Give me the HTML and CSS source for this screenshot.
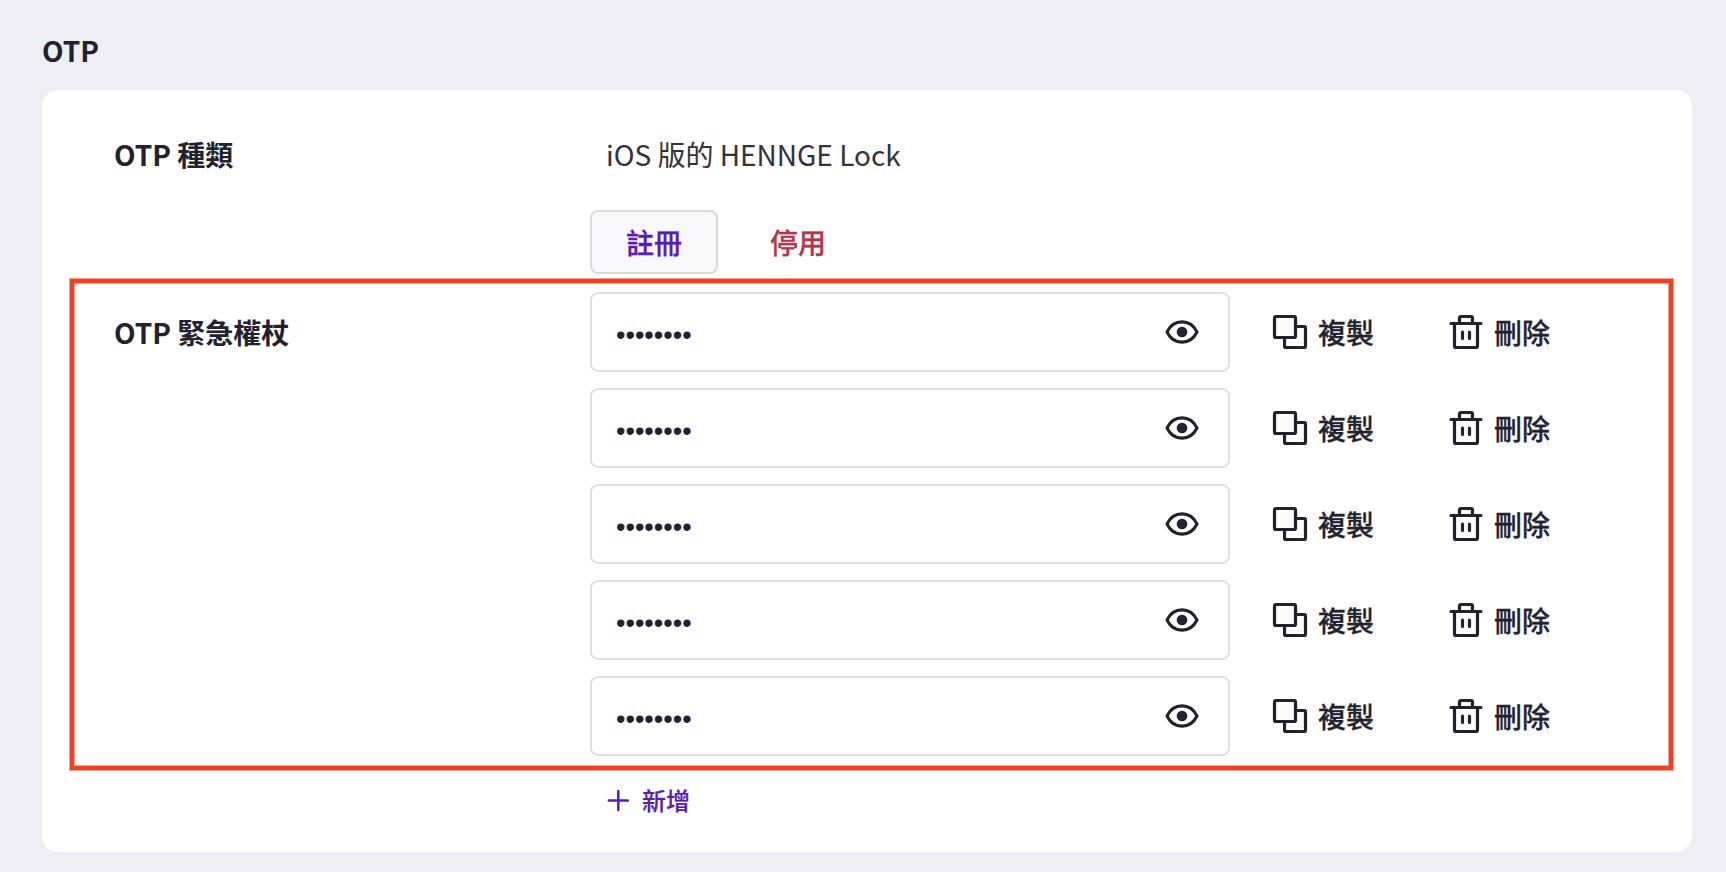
FILE: index.html
```html
<!DOCTYPE html>
<html lang="zh-Hant">
<head>
<meta charset="utf-8">
<meta name="viewport" content="width=device-width, initial-scale=1">
<title>OTP</title>
<link rel="stylesheet" href="styles.css">
</head>
<body>
<svg class="sprite" aria-hidden="true">
  <symbol id="eye" viewBox="0 0 36 36">
    <path d="M3 18C6.200 11.500 12 7.900 18 7.900S29.800 11.500 33 18C29.800 24.500 24 28.100 18 28.100S6.200 24.500 3 18Z" fill="none" stroke="currentColor" stroke-width="3.100" stroke-linejoin="round"/>
    <circle cx="18" cy="18" r="5.300" fill="currentColor"/>
  </symbol>
  <symbol id="copy" viewBox="0 0 36 36">
    <g fill="none" stroke="currentColor" stroke-width="3.200">
      <rect x="12.500" y="12.500" width="21" height="21" rx="1.500"/>
      <rect x="2.500" y="2.500" width="21" height="21" rx="1.500" fill="#fcfcfd"/>
    </g>
  </symbol>
  <symbol id="trash" viewBox="0 0 36 36">
    <g fill="none" stroke="currentColor" stroke-width="3.200" stroke-linecap="round" stroke-linejoin="round">
      <path d="M3 9.500H33"/>
      <path d="M11.500 9.500V4a1.500 1.500 0 0 1 1.500-1.500H23A1.500 1.500 0 0 1 24.500 4V9.500"/>
      <path d="M6.500 9.500V32A1.500 1.500 0 0 0 8 33.500H28A1.500 1.500 0 0 0 29.500 32V9.500"/>
      <path d="M14.500 18V24.500M21.500 18V24.500"/>
    </g>
  </symbol>
</svg>
<main class="page">
  <h1 class="title">OTP</h1>
  <section class="card">
    <div class="row">
      <h2 class="label">OTP 種類</h2>
      <div class="type">
        <p class="value">iOS 版的 HENNGE Lock</p>
        <div class="buttons">
          <button class="btn btn-primary" type="button">註冊</button>
          <button class="btn btn-danger" type="button">停用</button>
        </div>
      </div>
    </div>
    <div class="row tokens">
      <h2 class="label label-token">OTP 緊急權杖</h2>
      <ul class="list">
        <li class="item">
          <div class="field">
            <input class="input" type="password" value="48201937" aria-label="OTP 緊急權杖 1">
            <button class="reveal" type="button" aria-label="顯示"><svg class="icon"><use href="#eye"/></svg></button>
          </div>
          <div class="actions">
            <button class="action" type="button"><svg class="icon"><use href="#copy"/></svg>複製</button>
            <button class="action" type="button"><svg class="icon"><use href="#trash"/></svg>刪除</button>
          </div>
        </li>
        <li class="item">
          <div class="field">
            <input class="input" type="password" value="59310284" aria-label="OTP 緊急權杖 2">
            <button class="reveal" type="button" aria-label="顯示"><svg class="icon"><use href="#eye"/></svg></button>
          </div>
          <div class="actions">
            <button class="action" type="button"><svg class="icon"><use href="#copy"/></svg>複製</button>
            <button class="action" type="button"><svg class="icon"><use href="#trash"/></svg>刪除</button>
          </div>
        </li>
        <li class="item">
          <div class="field">
            <input class="input" type="password" value="70623915" aria-label="OTP 緊急權杖 3">
            <button class="reveal" type="button" aria-label="顯示"><svg class="icon"><use href="#eye"/></svg></button>
          </div>
          <div class="actions">
            <button class="action" type="button"><svg class="icon"><use href="#copy"/></svg>複製</button>
            <button class="action" type="button"><svg class="icon"><use href="#trash"/></svg>刪除</button>
          </div>
        </li>
        <li class="item">
          <div class="field">
            <input class="input" type="password" value="18475026" aria-label="OTP 緊急權杖 4">
            <button class="reveal" type="button" aria-label="顯示"><svg class="icon"><use href="#eye"/></svg></button>
          </div>
          <div class="actions">
            <button class="action" type="button"><svg class="icon"><use href="#copy"/></svg>複製</button>
            <button class="action" type="button"><svg class="icon"><use href="#trash"/></svg>刪除</button>
          </div>
        </li>
        <li class="item">
          <div class="field">
            <input class="input" type="password" value="36907142" aria-label="OTP 緊急權杖 5">
            <button class="reveal" type="button" aria-label="顯示"><svg class="icon"><use href="#eye"/></svg></button>
          </div>
          <div class="actions">
            <button class="action" type="button"><svg class="icon"><use href="#copy"/></svg>複製</button>
            <button class="action" type="button"><svg class="icon"><use href="#trash"/></svg>刪除</button>
          </div>
        </li>
      </ul>
    </div>
    <div class="row">
      <div class="add-cell">
        <button class="add" type="button">
          <svg class="plus" viewBox="0 0 24 24" aria-hidden="true"><path d="M2.800 12.500H21.800M12.300 3V22" fill="none" stroke="currentColor" stroke-width="2.500" stroke-linecap="round"/></svg>新增
        </button>
      </div>
    </div>
  </section>
</main>
</body>
</html>
```

FILE: styles.css
```css
* {
  box-sizing: border-box;
}

body {
  margin: 0;
  background: #eeedf4;
  color: #24212f;
  font-family: "Noto Sans CJK TC", "Noto Sans", sans-serif;
  font-size: 28px;
  line-height: 40px;
}

h1,
h2,
p,
ul {
  margin: 0;
  padding: 0;
  font-size: inherit;
}

button {
  margin: 0;
  padding: 0;
  border: 0;
  background: none;
  color: inherit;
  font: inherit;
  font-weight: 500;
  -webkit-text-stroke: 0.01em currentColor;
  cursor: pointer;
}

.sprite {
  position: absolute;
  width: 0;
  height: 0;
}

.page {
  padding: 30px 34px 20px 42px;
}

.title {
  margin-bottom: 20px;
}

.card {
  padding: 44px 0 32px;
  border-radius: 16px;
  background: #fff;
}

.row {
  display: grid;
  grid-template-columns: 476px 1fr;
  padding: 0 58px 0 72px;
}

.label {
  font-weight: 700;
}

.value {
  margin-bottom: 36px;
  padding-left: 16px;
  color: #33313d;
}

.buttons {
  display: flex;
  gap: 16px;
}

.btn {
  height: 64px;
  padding: 0 34px;
  border: 2px solid transparent;
  border-radius: 8px;
}

.btn-primary {
  border-color: #dadadd;
  background: #f8f8fb;
  color: #581cb4;
}

.btn-danger {
  color: #b5344c;
}

.tokens {
  margin: 5px 19px 0 28px;
  padding: 9px 39px 10px 40px;
  border: 4px solid #ee4023;
  box-shadow: 0 0 0 1px #f6a294, inset 0 0 0 1px #f6a294;
}

.label-token {
  padding-top: 20px;
}

.list {
  display: grid;
  gap: 16px;
  list-style: none;
}

.item {
  display: flex;
  align-items: center;
  gap: 42px;
}

.field {
  position: relative;
  flex: 1;
}

.input {
  display: block;
  width: 100%;
  height: 80px;
  padding: 6px 80px 0 24px;
  border: 2px solid #e0e0e0;
  border-radius: 8px;
  background: #fff;
  color: inherit;
  font-family: "Liberation Sans", sans-serif;
  font-size: 27px;
}

.reveal {
  position: absolute;
  top: 22px;
  right: 30px;
  display: flex;
}

.icon {
  width: 36px;
  height: 36px;
}

.actions {
  display: flex;
  gap: 74px;
  padding-right: 80px;
}

.action {
  display: flex;
  align-items: center;
  gap: 10px;
}

.add-cell {
  grid-column: 2;
  padding: 10px 0 0 16px;
}

.add {
  display: flex;
  align-items: center;
  gap: 12px;
  color: #581cb4;
  font-size: 24px;
}

.plus {
  width: 24px;
  height: 24px;
}
```
